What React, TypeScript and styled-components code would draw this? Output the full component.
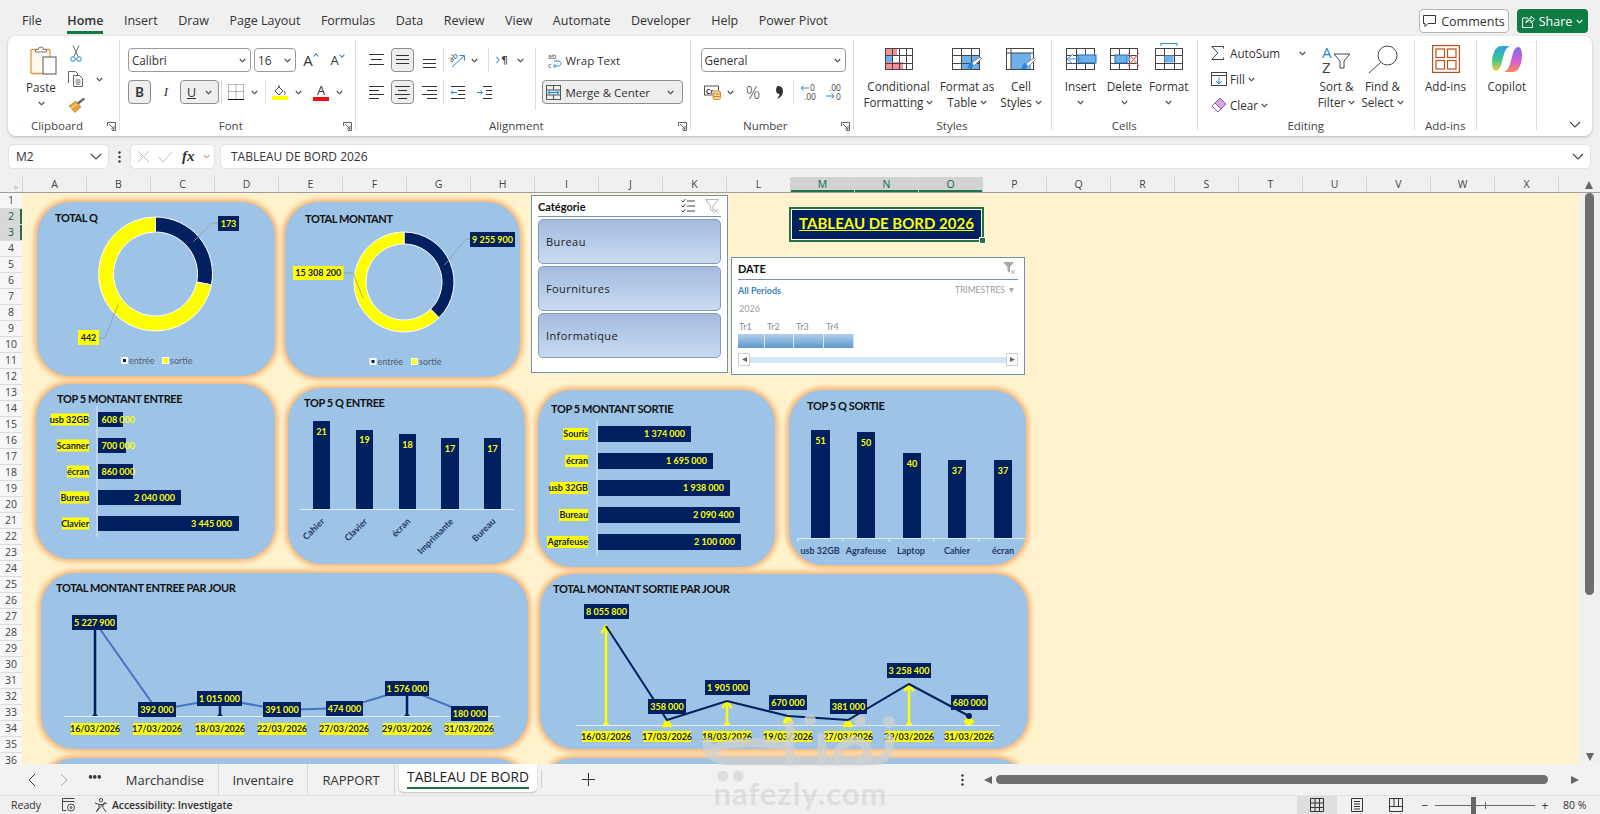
import React from "react";
import styled, { createGlobalStyle } from "styled-components";

const Global = createGlobalStyle`
  html, body { margin: 0; padding: 0; background: #f0f0f0; }
  * { box-sizing: border-box; }
`;
const UI = `"Open Sans", "Noto Sans", sans-serif`;
const CAL = `Lato, "Liberation Sans", sans-serif`;

const Page = styled.div`
  position: relative; width: 1600px; height: 814px; overflow: hidden;
  background: #f0f0f0; font-family: ${UI}; color: #333; display: flex; flex-direction: column;
`;

/* ---------- top tabs ---------- */
const TopBar = styled.div`height: 36px; display: flex; align-items: flex-start; flex: none;`;
const TabList = styled.div`display: flex; padding: 12px 0 0 22px; gap: 20.5px;`;
const TopTab = styled.div<{ $on?: boolean }>`
  font-size: 12.5px; line-height: 18px; height: 22px; color: #333; white-space: nowrap;
  font-weight: ${(p) => (p.$on ? 600 : 400)};
  border-bottom: ${(p) => (p.$on ? "3px solid #107c41" : "none")};
  margin-left: ${(p) => (p.$on ? 5 : 0)}px;
`;
const TopActions = styled.div`margin-left: auto; display: flex; gap: 8px; padding: 9px 12px 0 0;`;
const CommentsBtn = styled.div`
  width: 90px; height: 24px; border: 1px solid #b5b5b5; border-radius: 4px; background: #fff;
  display: flex; align-items: center; justify-content: center; gap: 5px; font-size: 12.5px;
`;
const ShareBtn = styled.div`
  width: 71px; height: 24px; border-radius: 4px; background: #0f7b45; color: #fff;
  display: flex; align-items: center; justify-content: center; gap: 4px; font-size: 12.5px;
`;

/* ---------- ribbon ---------- */
const Ribbon = styled.div`
  flex: none; margin-left: 8px; width: 1584px; height: 100px; background: #fff; border-radius: 8px;
  box-shadow: 0 1px 3px rgba(0,0,0,.22); display: flex; padding-top: 4px; position: relative;
`;
const Group = styled.div<{ $w: number; $plain?: boolean }>`
  width: ${(p) => p.$w}px; flex: none; height: 90px; display: flex; flex-direction: column;
  border-right: ${(p) => (p.$plain ? "none" : "1px solid #dedede")};
`;
const GroupBody = styled.div`height: 78px; display: flex; flex: none;`;
const GroupFoot = styled.div<{ $off?: number }>`
  height: 16px; flex: none; display: grid; grid-template-columns: 1fr auto 1fr; align-items: center;
  font-size: 11.5px; line-height: 16px; color: #444; padding-right: ${(p) => p.$off || 0}px;
`;
const Launcher = styled.span`justify-self: end; display: flex; margin-right: -10px;`;
const Stack = styled.div<{ $pl?: number; $w?: number }>`
  display: flex; flex-direction: column; gap: 8px; padding-top: 8px;
  ${(p) => (p.$pl ? `padding-left:${p.$pl}px;` : "")}
  ${(p) => (p.$w ? `width:${p.$w}px;flex:none;` : "")}
`;
const Row = styled.div`display: flex; height: 24px; align-items: center;`;
const Slot = styled.div<{ $w?: number; $ml?: number }>`
  flex: none; display: flex; align-items: center; justify-content: center; height: 24px;
  ${(p) => (p.$w ? `width:${p.$w}px;` : "")}
  margin-left: ${(p) => p.$ml || 0}px; font-size: 11.7px; white-space: nowrap;
`;
const Pressed = styled(Slot)`
  background: #eee; border: 1px solid #8d8d8d; border-radius: 4px; font-weight: 400;
`;
const VSep = styled.div<{ $ml?: number }>`width: 1px; height: 24px; background: #dcdcdc; flex: none; margin-left: ${(p) => p.$ml || 0}px;`;
const FullSep = styled(VSep)`height: 62px; margin-top: 8px;`;
const Select = styled.div<{ $w: number; $ml?: number }>`
  flex: none; width: ${(p) => p.$w}px; margin-left: ${(p) => p.$ml || 0}px; height: 24px; background: #fff;
  border: 1px solid #9a9a9a; border-radius: 4px; padding: 0 4px 0 3px; font-size: 11.7px;
  display: flex; align-items: center; justify-content: space-between; font-family: ${UI};
`;
const PasteCol = styled.div`width: 42px; margin-left: 12px; flex: none; display: flex; flex-direction: column; align-items: center; padding-top: 5px;`;
const PasteIconBox = styled.div`height: 33px; margin-left: 4px;`;
const PasteText = styled.div`font-size: 11.7px; line-height: 16px; margin-top: 1px;`;
const ChevLine = styled.div`height: 16px; display: flex; align-items: center; justify-content: center;`;
const ClipCol = styled.div`display: flex; flex-direction: column; margin-left: 6px; flex: none;`;
const ClipRow = styled.div`height: 26px; display: flex; align-items: center;`;
const Big = styled.div<{ $w: number }>`
  width: ${(p) => p.$w}px; flex: none; display: flex; flex-direction: column; align-items: center;
`;
const BigIcon = styled.div<{ $pt?: number }>`height: 38px; padding-top: ${(p) => p.$pt ?? 8}px; display: flex; justify-content: center; flex: none;`;
const BigText = styled.div`font-size: 11.7px; line-height: 16px; text-align: center; white-space: nowrap; display: flex; flex-direction: column; align-items: center;`;
const TextChev = styled.span`display: inline-flex; align-items: center; gap: 3px;`;
const EditCol = styled.div`width: 120px; flex: none; display: flex; flex-direction: column; padding-left: 13px;`;
const EditRow = styled.div`height: 26px; display: flex; align-items: center; font-size: 11.7px;`;
const EditIcon = styled.span`width: 19px; display: flex; flex: none;`;
const Collapse = styled.div`flex: 1; display: flex; justify-content: flex-end; align-items: flex-end; padding: 0 11px 8px 0;`;
const FontA = styled.span<{ $s: number }>`font-size: ${(p) => p.$s}px; line-height: 1; display: inline-flex; align-items: flex-start; font-family: ${UI};`;
const BoldB = styled.span`font-weight: 700; font-size: 13px; font-family: ${CAL};`;
const ItalicI = styled.span`font-style: italic; font-size: 13px; font-family: "Liberation Serif", serif;`;
const UnderU = styled.span`text-decoration: underline; font-size: 12.5px;`;
const ColorBar = styled.div`display: flex; flex-direction: column; align-items: center; width: 16px;`;
const Bar = styled.div<{ $c: string }>`width: 16px; height: 4px; background: ${(p) => p.$c};`;
const WrapLine = styled.div`display: flex; height: 24px; align-items: center; font-size: 11.5px; padding-left: 12px; gap: 4px;`;
const MergeBtn = styled.div`
  margin-left: 6px; width: 141px; height: 24px; background: #eee; border: 1px solid #8d8d8d; border-radius: 4px;
  display: flex; align-items: center; font-size: 11.5px; padding: 0 8px 0 3px; gap: 5px;
`;
const Grow = styled.span`flex: 1;`;

/* ---------- formula bar ---------- */
const FormulaRow = styled.div`
  flex: none; height: 25px; margin: 8px 0; padding-left: 8px; display: flex; align-items: stretch; width: 1591px;
`;
const NameBox = styled.div`
  width: 101px; background: #fff; border: 1px solid #e2e2e2; border-radius: 5px; display: flex; align-items: center;
  justify-content: space-between; padding: 0 6px 0 7px; font-size: 12px;
`;
const DotsV = styled.div`width: 21px; display: flex; align-items: center; justify-content: center;`;
const FxBox = styled.div`
  width: 85px; background: #fff; border: 1px solid #e2e2e2; border-radius: 5px; display: flex; align-items: center; padding-left: 6px; gap: 8px;
`;
const FxText = styled.span`font: italic 700 15px "Liberation Serif", serif; color: #333; margin-left: 1px;`;
const FormulaInput = styled.div`
  flex: 1; margin-left: 5px; background: #fff; border: 1px solid #e2e2e2; border-radius: 5px; display: flex; align-items: center;
  justify-content: space-between; padding: 0 6px 0 10px; font-size: 12px;
`;

/* ---------- grid headers ---------- */
const ColHeader = styled.div`flex: none; height: 16px; display: flex; background: #f0f0f0; border-bottom: 1px solid #9e9e9e;`;
const Corner = styled.div`width: 23px; flex: none; border-right: 1px solid #d5d5d5; display: flex; align-items: flex-end; justify-content: flex-end; padding: 0 3px 2px 0;`;
const ColCell = styled.div<{ $on?: boolean }>`
  width: 64px; flex: none; display: flex; align-items: center; justify-content: center; font-size: 10.5px; line-height: 15px;
  border-right: 1px solid #d5d5d5; color: ${(p) => (p.$on ? "#0e6b3a" : "#444")};
  background: ${(p) => (p.$on ? "#d2d2d2" : "transparent")};
  ${(p) => (p.$on ? "box-shadow: inset 0 -2px 0 #217346;" : "")}
`;
const ColRest = styled.div`flex: 1; display: flex; justify-content: flex-end; align-items: center; padding-right: 7px;`;
const Main = styled.div`flex: none; height: 571px; display: flex;`;
const RowHead = styled.div`width: 22px; flex: none; overflow: hidden; background: #f6f6f6;`;
const RowCell = styled.div<{ $on?: boolean }>`
  height: 16px; font-size: 10.5px; line-height: 15px; text-align: center; border-bottom: 1px solid #dcdcdc;
  color: ${(p) => (p.$on ? "#0e6b3a" : "#444")};
  background: ${(p) => (p.$on ? "#d8d8d8" : "transparent")};
  ${(p) => (p.$on ? "box-shadow: inset -2px 0 0 #217346;" : "")}
`;
const Sheet = styled.div`width: 1557px; flex: none; position: relative; overflow: hidden; background: #fff2cc; border-left: 0;`;
const VScroll = styled.div`flex: 1; display: flex; flex-direction: column; align-items: center; background: #f0f0f0; padding: 0 0 3px 0;`;
const VThumb = styled.div`width: 9px; height: 402px; border-radius: 5px; background: #6e6e6e; flex: none;`;
const VDown = styled.div`margin-top: auto; display: flex;`;

/* ---------- canvas items ---------- */
const CardBox = styled.div<{ $x: number; $y: number; $w: number; $h: number; $tx: number; $ty: number }>`
  position: absolute; left: ${(p) => p.$x - 22}px; top: ${(p) => p.$y - 193}px;
  width: ${(p) => p.$w}px; height: ${(p) => p.$h}px; background: #9dc3e6; border-radius: 34px;
  box-shadow: 0 0 4px 2.5px #f7b97d; padding: ${(p) => p.$ty}px 0 0 ${(p) => p.$tx}px;
`;
const CardTitle = styled.div`font: 700 11px/14px ${CAL}; letter-spacing: -.4px; color: #111; white-space: nowrap; position: relative; z-index: 1;`;
const ChartSvg = styled.svg`position: absolute; left: 0; top: 0; overflow: visible;`;
const ValText = styled.text`font: 700 9px ${CAL}; fill: #ffff00;`;
const DarkVal = styled.text`font: 700 9px ${CAL}; fill: #10204c;`;
const AxisText = styled.text`font: 700 9px ${CAL}; fill: #1f3864;`;
const LegendText = styled.text`font: 400 9px ${CAL}; fill: #50606f;`;

const SlicerBox = styled.div<{ $x: number; $y: number; $w: number; $h: number }>`
  position: absolute; left: ${(p) => p.$x - 22}px; top: ${(p) => p.$y - 193}px;
  width: ${(p) => p.$w}px; height: ${(p) => p.$h}px; background: #fff; border: 1px solid #6b93b5; padding: 0 6px;
  display: flex; flex-direction: column;
`;
const SlicerHead = styled.div`
  height: 21px; flex: none; display: flex; align-items: center; justify-content: space-between; border-bottom: 1px solid #6f93b3;
  font: 700 11px ${CAL}; color: #111; padding: 0 2px 0 0;
`;
const SlicerIcons = styled.div`display: flex; gap: 10px; align-items: center;`;
const SlicerItems = styled.div`display: flex; flex-direction: column; gap: 2.5px; padding-top: 2px;`;
const SlicerItem = styled.div`
  height: 44.5px; border: 1px solid #8a9bb0; border-radius: 5px; background: linear-gradient(#a3bbdf, #c8dbf1);
  display: flex; align-items: center; padding-left: 7px; font: 400 11px "Open Sans", sans-serif; letter-spacing: .4px; color: #222;
`;
const DateHead = styled(SlicerHead)`height: 22px;`;
const PeriodRow = styled.div`display: flex; justify-content: space-between; align-items: center; height: 20px; font: 400 9px ${CAL}; color: #9c9c9c; padding-right: 4px;`;
const AllPeriods = styled.span`font: 700 9px ${CAL}; color: #3f7fba;`;
const TrimRight = styled.span`display: inline-flex; align-items: center; gap: 4px; font-size: 8.5px;`;
const YearLabel = styled.div`font: 400 9px ${CAL}; color: #9c9c9c; height: 18px; line-height: 18px; padding-left: 1px;`;
const TrRow = styled.div`display: flex; height: 16px; font: 400 9px ${CAL}; color: #8c8c8c; align-items: center;`;
const TrCell = styled.div<{ $w: number }>`width: ${(p) => p.$w}px; padding-left: 1px; flex: none;`;
const BlueRow = styled.div`display: flex; height: 14px;`;
const BlueCell = styled.div<{ $w: number }>`width: ${(p) => p.$w}px; flex: none; background: linear-gradient(#b3cfea, #5c99cf); border-right: 1px solid #dbe8f4;`;
const HScrollRow = styled.div`display: flex; align-items: center; height: 13px; margin-top: 5px;`;
const MiniBtn = styled.div`width: 12px; height: 13px; border: 1px solid #cfcfcf; display: flex; align-items: center; justify-content: center; flex: none; background: #fff;`;
const MiniTrack = styled.div`flex: 1; height: 6px; background: #d4e5f4;`;

const TitleCell = styled.div`
  position: absolute; left: ${789 - 22}px; top: ${207 - 193}px; width: 195px; height: 35px;
  background: #002060; border: 2.5px solid #217346; outline: 1px solid #fff; outline-offset: -3.5px;
  color: #ffff00; font: 700 15px/29px ${CAL}; text-align: center; text-decoration: underline; white-space: nowrap;
`;
const FillHandle = styled.div`position: absolute; right: -4px; bottom: -4px; width: 7px; height: 7px; background: #217346; border: 1px solid #fff;`;

/* ---------- sheet tabs, status ---------- */
const TabsBar = styled.div`flex: none; height: 32px; display: flex; align-items: flex-start; background: #f2f2f2; border-bottom: 1px solid #e3e3e3; position: relative;`;
const NavIcon = styled.div<{ $ml: number; $w?: number }>`margin-left: ${(p) => p.$ml}px; width: ${(p) => p.$w || 12}px; height: 31px; display: flex; align-items: center; justify-content: center; flex: none;`;
const SheetTab = styled.div<{ $w: number; $ml?: number }>`
  width: ${(p) => p.$w}px; margin-left: ${(p) => p.$ml || 0}px; height: 31px; flex: none; display: flex; align-items: center; justify-content: center; font-size: 13px; color: #333;
  border-right: 1px solid #d8d8d8;
`;
const ActiveTab = styled.div`
  width: 138px; height: 28px; margin-left: 4px; flex: none; background: #fff; border-radius: 0 0 5px 5px; box-shadow: 0 1px 2px rgba(0,0,0,.2);
  font-size: 13.8px; color: #222; display: flex; flex-direction: column; align-items: center; padding-top: 3px; line-height: 19px; white-space: nowrap;
`;
const ActiveLine = styled.div`width: 122px; height: 2px; background: #217346; margin-top: 1px;`;
const ThinSep = styled.div<{ $ml: number }>`width: 1px; height: 18px; margin: 6px 0 0 ${(p) => p.$ml}px; background: #cfcfcf; flex: none;`;
const HThumb = styled.div`width: 552px; height: 9px; background: #6e6e6e; border-radius: 5px; margin: 11px 0 0 4px; flex: none;`;
const StatusBar = styled.div`flex: none; height: 18px; display: flex; align-items: center; background: #f0f0f0; font-size: 10.5px; color: #333;`;
const StatusReady = styled.span`margin-left: 11px; width: 51px; flex: none;`;
const StatusAcc = styled.span`margin-left: 4px; font-weight: 600; font-family: ${UI}; font-size: 10.5px; letter-spacing: -.1px;`;
const StatusRight = styled.div`margin-left: auto; display: flex; align-items: center; height: 18px;`;
const ViewBtn = styled.div<{ $on?: boolean; $w: number }>`
  width: ${(p) => p.$w}px; height: 18px; display: flex; align-items: center; justify-content: center; flex: none;
  background: ${(p) => (p.$on ? "#dedede" : "transparent")};
`;
const Zoomer = styled.div`width: 100px; height: 1px; background: #666; margin: 0 5px; position: relative; flex: none;`;
const ZoomThumb = styled.div`position: absolute; left: 36px; top: -8px; width: 5px; height: 17px; background: #666;`;
const ZoomTick = styled.div`position: absolute; left: 50px; top: -3px; width: 1px; height: 7px; background: #666;`;
const ZoomSign = styled.span<{ $ml?: number }>`font-size: 12px; width: 10px; text-align: center; flex: none; margin-left: ${(p) => p.$ml || 0}px;`;
const ZoomPct = styled.span`font-size: 10.5px; width: 50px; padding-left: 13px; flex: none;`;

/* ---------- watermark ---------- */
const Watermark = styled.div`
  position: absolute; left: 695px; top: 705px; width: 205px; display: flex; flex-direction: column; align-items: center; pointer-events: none;
`;
const WaterText = styled.div`
  font: 700 31px/30px Lato, sans-serif; letter-spacing: 1px; color: rgba(190,190,190,.38); margin-top: -11px; padding-left: 6px;
`;

/* ---------- small icons ---------- */
const Chev = ({ c = "#444", s = 7 }: { c?: string; s?: number }) => (
  <svg width={s} height={5} viewBox="0 0 7 5"><path d="M.8 1 3.5 3.8 6.2 1" fill="none" stroke={c} strokeWidth="1.1" /></svg>
);
const BigChev = ({ c = "#444" }: { c?: string }) => (
  <svg width={12} height={7} viewBox="0 0 12 7"><path d="M1 1l5 5 5-5" fill="none" stroke={c} strokeWidth="1.1" /></svg>
);
const LauncherIcon = () => (
  <svg width={9} height={9} viewBox="0 0 9 9" fill="none" stroke="#555" strokeWidth=".9"><path d="M.5 4V.5h8v8H5M2 2l5 5M7 4v3H4" /></svg>
);
const PasteIcon = () => (
  <svg width={27} height={30} viewBox="0 0 27 30">
    <rect x="1" y="4.5" width="19" height="24" rx="1" fill="#fff9ef" stroke="#dc9c3e" strokeWidth="1.3" />
    <path d="M5.5 7V4.5h3a2.5 2.5 0 0 1 5 0h3V7z" fill="#fff" stroke="#777" />
    <rect x="13" y="12" width="13" height="17" fill="#fff" stroke="#555" />
  </svg>
);
const ScissorsIcon = () => (
  <svg width={12} height={17} viewBox="0 0 12 17" fill="none">
    <path d="M3 .5l5 11M9 .5l-5 11" stroke="#666" />
    <circle cx="3" cy="14" r="2.3" stroke="#2e86c1" /><circle cx="9" cy="14" r="2.3" stroke="#2e86c1" />
  </svg>
);
const CopyIcon = () => (
  <svg width={16} height={16} viewBox="0 0 16 16" fill="#fff" stroke="#555" strokeWidth=".9">
    <path d="M.5 12V.5h7l2 2V5" /><path d="M5.5 4.5h6l3 3v8h-9z" /><path d="M7.5 9h5M7.5 11h5M7.5 13h5" />
  </svg>
);
const BrushIcon = () => (
  <svg width={17} height={15} viewBox="0 0 17 15">
    <path d="M1 8l7-5 5 6-6 5.5z" fill="#e6a13c" stroke="#b87a22" strokeWidth=".6" />
    <path d="M3 10l6-4" stroke="#fff" strokeWidth=".8" />
    <path d="M10.5 5l5-4" stroke="#707070" strokeWidth="2.6" strokeLinecap="round" />
  </svg>
);
const Lines = ({ ys }: { ys: [number, number, number][] }) => (
  <svg width={15} height={16} viewBox="0 0 15 16" stroke="#333" strokeWidth="1">
    {ys.map(([y, a, b], i) => <path key={i} d={`M${a} ${y + .5}H${b}`} />)}
  </svg>
);
const Caret = ({ up }: { up?: boolean }) => (
  <svg width={6} height={4} viewBox="0 0 6 4"><path d={up ? "M.5 3.5 3 .8l2.5 2.7" : "M.5.5 3 3.2 5.500.5"} fill="none" stroke="#2b88d8" strokeWidth="1.1" /></svg>
);
const BorderIcon = () => (
  <svg width={16} height={16} viewBox="0 0 16 16" fill="none" stroke="#777" strokeWidth="1" strokeDasharray="1 1">
    <path d="M.5.500h15M.5 7.500h15M.5.500v15M8 .5v15M15.500.5v15" /><path d="M0 15.500h16" stroke="#111" strokeDasharray="none" />
  </svg>
);
const BucketIcon = () => (
  <svg width={16} height={11} viewBox="0 0 16 11" fill="none">
    <path d="M3 6l4-4 4 4-4 4z" stroke="#444" /><path d="M7 2V0M12 6c1.500 2 1.500 3 .5 3.500" stroke="#444" />
  </svg>
);
const FontColorA = () => <FontA $s={13}>A</FontA>;
const OrientIcon = () => (
  <svg width={17} height={16} viewBox="0 0 17 16" overflow="visible">
    <text x="1" y="9" fontSize="8" fill="#444" fontFamily="Open Sans" transform="rotate(-40 4 8)">ab</text>
    <path d="M3 15 15 4M10.500 3.500H15.500V8.500" fill="none" stroke="#2b88d8" />
  </svg>
);
const ParaIcon = () => (
  <svg width={13} height={12} viewBox="0 0 13 12" overflow="visible">
    <path d="M.5 3 3 6 .5 9" fill="none" stroke="#2b88d8" strokeWidth="1.1" />
    <text x="5" y="10" fontSize="11" fill="#444" fontFamily="DejaVu Sans">¶</text>
  </svg>
);
const IndentIcon = ({ inc }: { inc?: boolean }) => (
  <svg width={15} height={13} viewBox="0 0 15 13" fill="none">
    <path d={inc ? "M6 .5h9M6 12.500h9M9 4.500h6M9 8.500h6" : "M0 .5h14M0 12.500h14M7 4.500h7M7 8.500h7"} stroke="#333" />
    <path d={inc ? "M0 6.500h5M3.500 4.500l2 2-2 2" : "M0 6.500h6M2 4.500l-2 2 2 2"} stroke="#2b88d8" />
  </svg>
);
const WrapIcon = () => (
  <svg width={14} height={16} viewBox="0 0 14 16" overflow="visible">
    <text x="0" y="6.500" fontSize="7" fill="#444" fontFamily="Open Sans">ab</text>
    <text x="0" y="15.500" fontSize="7" fill="#444" fontFamily="Open Sans">c</text>
    <path d="M6 14h4c4 0 4-5 0-5H6M7.500 12 5.500 14l2 2" fill="none" stroke="#2b88d8" />
  </svg>
);
const MergeIcon = () => (
  <svg width={15} height={15} viewBox="0 0 15 15" fill="none">
    <rect x=".5" y=".5" width="14" height="14" stroke="#555" />
    <rect x="1" y="5" width="13" height="5" fill="#cfe6f7" />
    <path d="M0 5h15M0 10h15M7.500 0v5M7.500 10v5" stroke="#555" />
    <path d="M2 7.500h11M4 5.800 2 7.500l2 1.700M11 5.800l2 1.700-2 1.700" stroke="#2b88d8" />
  </svg>
);
const AcctIcon = () => (
  <svg width={17} height={15} viewBox="0 0 17 15" overflow="visible">
    <rect x=".5" y="1" width="14" height="9" fill="#fff" stroke="#555" />
    <text x="2" y="8.500" fontSize="6.500" fill="#333" fontFamily="Open Sans" fontWeight="700">Cr</text>
    <rect x="9" y="6" width="7.500" height="8.500" rx="2" fill="#f4d6a5" stroke="#d98a23" />
    <path d="M9 9h7.500M9 11.500h7.500" stroke="#d98a23" />
  </svg>
);
const PctText = styled.span`font-size: 18px; font-weight: 300; color: #444;`;
const CommaIcon = () => (
  <svg width={9} height={13} viewBox="0 0 9 13"><path d="M3 0c3 0 5 2 5 5 0 4-3 7-6 8 1.500-2 2.500-3.500 2.500-5C3 8 1 7 1 4.500 1 2 2 0 3 0z" fill="#333" /></svg>
);
const DecIcon = ({ inc }: { inc?: boolean }) => (
  <svg width={16} height={17} viewBox="0 0 16 17" overflow="visible">
    <text x={inc ? 3 : 10} y="7" fontSize="8.500" fill="#444" fontFamily="Open Sans">{inc ? ".00" : "0"}</text>
    <text x={inc ? 10 : 4} y="15.500" fontSize="8.500" fill="#444" fontFamily="Open Sans">{inc ? "0" : ".00"}</text>
    <path d={inc ? "M0 12h8M5.500 9.500 8 12l-2.500 2.500" : "M1 4h8M3.500 1.500 1 4l2.500 2.500"} fill="none" stroke="#2b88d8" />
  </svg>
);
const MiniBrush = ({ x, y }: { x: number; y: number }) => (
  <g transform={`translate(${x} ${y})`}>
    <path d="M0 11c4 1 7-1 6.500-4L4 5C1.500 6 2 9 0 11z" fill="#2b88d8" />
    <path d="M5 5.500 13 0l1.500 1.500-7 7" fill="#fff" stroke="#777" strokeWidth=".9" />
  </g>
);
const GridLines = ({ w, h, cols, rows }: { w: number; h: number; cols: number; rows: number }) => (
  <g stroke="#444" strokeWidth="1" fill="none">
    <rect x=".5" y=".5" width={w - 1} height={h - 1} />
    {Array.from({ length: cols - 1 }, (_, i) => <path key={"c" + i} d={`M${Math.round(((i + 1) * w) / cols) + .5} 0v${h}`} />)}
    {Array.from({ length: rows - 1 }, (_, i) => <path key={"r" + i} d={`M0 ${Math.round(((i + 1) * h) / rows) + .5}h${w}`} />)}
  </g>
);
const CondIcon = () => (
  <svg width={28} height={22} viewBox="0 0 28 22">
    <rect x="1" y="1" width="11" height="6" fill="#f58f96" /><rect x="1" y="7" width="6" height="7" fill="#6eb0ea" />
    <rect x="1" y="14" width="17" height="7" fill="#f58f96" />
    <GridLines w={28} h={22} cols={4} rows={3} />
  </svg>
);
const TableFmtIcon = () => (
  <svg width={30} height={28} viewBox="0 0 30 28">
    <rect x="10" y="7" width="18" height="14" fill="#6eb0ea" />
    <GridLines w={28} h={22} cols={3} rows={3} />
    <MiniBrush x={15} y={9} />
  </svg>
);
const CellFmtIcon = () => (
  <svg width={30} height={28} viewBox="0 0 30 28">
    <rect x="5" y="5" width="20" height="16" fill="#6eb0ea" />
    <GridLines w={28} h={22} cols={1} rows={1} />
    <path d="M0 5h28M5 0v22" stroke="#444" />
    <MiniBrush x={15} y={10} />
  </svg>
);
const InsertCell = () => (
  <svg width={32} height={22} viewBox="0 0 32 22">
    <g transform="translate(1 0)"><GridLines w={29} h={22} cols={3} rows={3} /></g>
    <rect x="13" y="7" width="18" height="8" fill="#6eb0ea" stroke="#1f6fb5" />
    <path d="M16 11H4M8 6l-6 5 6 5" fill="#fff" stroke="#2b88d8" />
  </svg>
);
const DeleteCell = () => (
  <svg width={30} height={22} viewBox="0 0 30 22">
    <GridLines w={28} h={22} cols={3} rows={3} />
    <rect x="5" y="7" width="12" height="8" fill="#6eb0ea" stroke="#1f6fb5" />
    <path d="M17 7v8l4-4z" fill="#6eb0ea" /><path d="M18 5l11 13M29 5 18 18" stroke="#e8615b" strokeWidth="1.1" />
  </svg>
);
const FormatCell = () => (
  <svg width={28} height={27} viewBox="0 0 28 27">
    <path d="M6 .5h16M6 0v3M22 0v3" stroke="#2b88d8" />
    <g transform="translate(0 5)"><GridLines w={28} h={22} cols={3} rows={3} /></g>
    <rect x="9.500" y="12.500" width="9" height="7" fill="#6eb0ea" />
  </svg>
);
const SigmaIcon = () => (
  <svg width={13} height={14} viewBox="0 0 13 14"><path d="M12.500 2.500V.5H.8l6 6.500-6 6.500h11.700v-2" fill="none" stroke="#444" /></svg>
);
const FillIcon = () => (
  <svg width={16} height={14} viewBox="0 0 16 14" fill="none"><rect x=".5" y=".5" width="15" height="13" stroke="#444" /><path d="M0 3.500h16" stroke="#444" /><path d="M8 5v7M5 9l3 3 3-3" stroke="#2b88d8" /></svg>
);
const EraserIcon = () => (
  <svg width={16} height={16} viewBox="0 0 16 16"><path d="M1 9 9 1l6 6-8 8z" fill="#d9a7e0" stroke="#9a55a8" /><path d="M4 6l6 6-3 3-6-6z" fill="#fff" stroke="#9a55a8" /></svg>
);
const SortIcon = () => (
  <svg width={29} height={27} viewBox="0 0 29 27" overflow="visible">
    <text x="0" y="12" fontSize="15" fill="#2b88d8" fontFamily="Open Sans">A</text>
    <text x="0" y="26.500" fontSize="15" fill="#444" fontFamily="Open Sans">Z</text>
    <path d="M12 8h16l-6 7v7h-4v-7z" fill="#fff" stroke="#444" />
  </svg>
);
const FindIcon = () => (
  <svg width={30} height={29} viewBox="0 0 30 29" fill="none" stroke="#444"><circle cx="19.500" cy="10.500" r="9.500" /><path d="M12.500 17.500 1 28" /></svg>
);
const AddinsIcon = () => (
  <svg width={28} height={28} viewBox="0 0 28 28" fill="none" stroke="#b7531c" strokeWidth="1.200">
    <rect x=".6" y=".6" width="26.800" height="26.800" /><rect x="4" y="4" width="8.500" height="8.500" /><rect x="15.500" y="4" width="8.500" height="8.500" /><rect x="4" y="15.500" width="8.500" height="8.500" /><rect x="15.500" y="15.500" width="8.500" height="8.500" />
  </svg>
);
const CopilotIcon = () => (
  <svg width={30} height={28} viewBox="0 0 30 28">
    <defs>
      <linearGradient id="cpA" x1="0" y1="0" x2="0" y2="1"><stop offset="0" stopColor="#2aa3e8" /><stop offset=".55" stopColor="#3cc58a" /><stop offset="1" stopColor="#f2d53c" /></linearGradient>
      <linearGradient id="cpB" x1="0" y1="0" x2="0" y2="1"><stop offset="0" stopColor="#7a6be8" /><stop offset=".55" stopColor="#d25fd8" /><stop offset="1" stopColor="#f68a52" /></linearGradient>
    </defs>
    <path d="M9 1H18C14 3 13 6 12 9L9 20C8 23 6 26 4 26 1 26 0 22 0 18 0 10 3 1 9 1Z" fill="url(#cpA)" />
    <path d="M21 27H12C16 25 17 22 18 19L21 8C22 5 24 2 26 2 29 2 30 6 30 10 30 18 27 27 21 27Z" fill="url(#cpB)" />
  </svg>
);
const CommentIcon = () => (
  <svg width={13} height={12} viewBox="0 0 13 12" fill="none" stroke="#333"><path d="M.500.5h12v8H5l-3 3v-3H.500z" /></svg>
);
const ShareIcon = () => (
  <svg width={13} height={13} viewBox="0 0 13 13" fill="none" stroke="#fff"><path d="M6 3H.5v9.500h10V8M4 8c0-3 3-4.500 5-4.500V1l3.500 3.500L9 8V5.500C7 5.500 5 6 4 8z" /></svg>
);
const XIcon = () => (
  <svg width={13} height={13} viewBox="0 0 13 13" stroke="#bdbdbd" fill="none"><path d="M1 1l11 11M12 1 1 12" /></svg>
);
const CheckIcon = () => (
  <svg width={15} height={12} viewBox="0 0 15 12" stroke="#bdbdbd" fill="none"><path d="M1 6l4 5L14 1" /></svg>
);
const Tri = ({ dir, c = "#666", s = 6 }: { dir: "u" | "d" | "l" | "r"; c?: string; s?: number }) => {
  const d = { u: "M0 10 5 0l5 10z", d: "M0 0h10L5 10z", l: "M10 0v10L0 5z", r: "M0 0v10l10-5z" }[dir];
  return <svg width={s} height={s} viewBox="0 0 10 10"><path d={d} fill={c} /></svg>;
};
const CheckListIcon = () => (
  <svg width={14} height={16} viewBox="0 0 14 16" fill="none" stroke="#444"><path d="M.5 2.500l1.500 1.500L4.500 1M.5 7.500 2 9l2.500-3M.5 12.500 2 14l2.500-3M6 3h8M6 8h8M6 13h8" /></svg>
);
const FunnelIcon = ({ w = 14 }: { w?: number }) => (
  <svg width={w} height={w} viewBox="0 0 14 14" fill="none" stroke="#b5b5b5"><path d="M.5.500h13L8 7v5.500L5.500 11V7z" /><path d="M9 10l4 3.500M13 10l-4 3.500" /></svg>
);
const SolidFunnel = () => (
  <svg width={13} height={13} viewBox="0 0 13 13"><path d="M0 0h11L7 5v6L4.500 9V5z" fill="#a8a8a8" /><path d="M8 8l4 4M12 8l-4 4" stroke="#b5b5b5" /></svg>
);
const MacroIcon = () => (
  <svg width={13} height={14} viewBox="0 0 13 14" fill="none" stroke="#444"><path d="M.5.500h12M.5 3.500h12M.5.500v12h4" /><circle cx="9" cy="9.500" r="3.500" /><circle cx="9" cy="9.500" r="1" /></svg>
);
const AccIcon = () => (
  <svg width={14} height={15} viewBox="0 0 14 15" fill="none" stroke="#444"><circle cx="7" cy="2.200" r="1.700" /><path d="M1 5l4 1.500h4L13 5M5 6.500v3L2 14M9 6.500v3l3 4.500" /><path d="M3 13 11 4" /></svg>
);
const ViewGrid = () => (
  <svg width={14} height={14} viewBox="0 0 14 14" stroke="#333" fill="none"><path d="M.5.500h13v13H.5zM.5 5h13M.5 9.500h13M5 .5v13M9.500.5v13" /></svg>
);
const ViewPage = () => (
  <svg width={14} height={14} viewBox="0 0 14 14" stroke="#333" fill="none"><path d="M1.500.500h11v13h-11zM4 3.500h6M4 6h6M4 8.500h6M4 11h6" /></svg>
);
const ViewBreak = () => (
  <svg width={14} height={14} viewBox="0 0 14 14" stroke="#333" fill="none"><path d="M.5.500h13v13H.5zM.5 8.500h13M5 .5v8M9.500.5v8" /></svg>
);
const ThreeDots = styled.span`font-weight: 800; font-size: 10px; letter-spacing: .5px; line-height: 1; transform: translateY(-3px);`;
const VDots = () => (
  <svg width={3} height={12} viewBox="0 0 3 12" fill="#333"><circle cx="1.500" cy="1.500" r="1.200" /><circle cx="1.500" cy="6" r="1.200" /><circle cx="1.500" cy="10.500" r="1.200" /></svg>
);
const ChevronLR = ({ right, c = "#333" }: { right?: boolean; c?: string }) => (
  <svg width={8} height={14} viewBox="0 0 8 14" fill="none" stroke={c}><path d={right ? "M1 1l6 6-6 6" : "M7 1 1 7l6 6"} /></svg>
);

/* ---------- charts ---------- */
type ChartFrame = { x: number; y: number; w: number; h: number; title: string; tx: number; ty: number; children: React.ReactNode };
const Card = ({ x, y, w, h, title, tx, ty, children }: ChartFrame) => (
  <CardBox $x={x} $y={y} $w={w} $h={h} $tx={tx - x} $ty={ty - y - 7}>
    {title && <CardTitle>{title}</CardTitle>}
    <ChartSvg width={w} height={h} viewBox={`${x} ${y} ${w} ${h}`}>{children}</ChartSvg>
  </CardBox>
);
const Tag = ({ x1, x2, y1, y2, t, yellow }: { x1: number; x2: number; y1: number; y2: number; t: string; yellow?: boolean }) => (
  <g>
    <rect x={x1} y={y1} width={x2 - x1} height={y2 - y1} fill={yellow ? "#ffff00" : "#002060"} />
    {yellow
      ? <DarkVal x={(x1 + x2) / 2} y={(y1 + y2) / 2 + 3.2} textAnchor="middle">{t}</DarkVal>
      : <ValText x={(x1 + x2) / 2} y={(y1 + y2) / 2 + 3.2} textAnchor="middle">{t}</ValText>}
  </g>
);
const pt = (cx: number, cy: number, r: number, a: number) => {
  const t = ((a - 90) * Math.PI) / 180;
  return [cx + r * Math.cos(t), cy + r * Math.sin(t)];
};
const ring = (cx: number, cy: number, ro: number, ri: number, a: number, b: number) => {
  const [x1, y1] = pt(cx, cy, ro, a), [x2, y2] = pt(cx, cy, ro, b), [x3, y3] = pt(cx, cy, ri, b), [x4, y4] = pt(cx, cy, ri, a);
  const large = b - a > 180 ? 1 : 0;
  return `M${x1} ${y1}A${ro} ${ro} 0 ${large} 1 ${x2} ${y2}L${x3} ${y3}A${ri} ${ri} 0 ${large} 0 ${x4} ${y4}Z`;
};
const Donut = ({ cx, cy, ro, ri, a }: { cx: number; cy: number; ro: number; ri: number; a: number }) => (
  <g stroke="#fff" strokeWidth="1">
    <path d={ring(cx, cy, ro, ri, 0, a)} fill="#002060" />
    <path d={ring(cx, cy, ro, ri, a, 360)} fill="#ffff00" />
  </g>
);
const Legend = ({ y, x1, x2 }: { y: number; x1: number; x2: number }) => (
  <g>
    <rect x={x1} y={y - 3} width={7} height={7} fill="#fff" /><rect x={x1 + 2} y={y - 1} width={3} height={3} fill="#002060" />
    <LegendText x={x1 + 8} y={y + 3.500}>entrée</LegendText>
    <rect x={x2} y={y - 3} width={7} height={7} fill="#fff" /><rect x={x2 + 1} y={y - 2} width={5} height={5} fill="#ffff00" />
    <LegendText x={x2 + 8} y={y + 3.500}>sortie</LegendText>
  </g>
);
const Leader = ({ d }: { d: string }) => <path d={d} fill="none" stroke="#8a9aa8" strokeWidth=".8" />;

type HB = { n: string; nl: number; end: number; t: string; te: number };
const HBars = ({ rows, ax, ay1, ay2, top, pitch, bh, nr }: { rows: HB[]; ax: number; ay1: number; ay2: number; top: number; pitch: number; bh: number; nr: number }) => (
  <g>
    <path d={`M${ax} ${ay1}V${ay2}`} stroke="#dfe9f2" />
    {rows.map((r, i) => {
      const y = top + i * pitch;
      return (
        <g key={r.n}>
          <rect x={ax + 1} y={y} width={r.end - ax - 1} height={bh} fill="#002060" />
          <ValText x={r.te} y={y + bh / 2 + 3.200} textAnchor="end">{r.t}</ValText>
          <rect x={r.nl} y={y + bh / 2 - 6} width={nr - r.nl} height={12} fill="#ffff00" />
          <DarkVal x={nr} y={y + bh / 2 + 3.200} textAnchor="end">{r.n}</DarkVal>
        </g>
      );
    })}
  </g>
);
type VB = { n: string; x1: number; x2: number; top: number; ly: number };
const VBars = ({ rows, base }: { rows: VB[]; base: number }) => (
  <g>
    {rows.map((r) => (
      <g key={r.n + r.x1}>
        <rect x={r.x1} y={r.top} width={r.x2 - r.x1} height={base - r.top} fill="#002060" />
      </g>
    ))}
  </g>
);

const Q_E: (VB & { v: string })[] = [
  { n: "Cahier", x1: 313, x2: 330, top: 421, ly: 435, v: "21" },
  { n: "Clavier", x1: 356, x2: 373, top: 430, ly: 443, v: "19" },
  { n: "écran", x1: 399, x2: 416, top: 434, ly: 448, v: "18" },
  { n: "Imprimante", x1: 441, x2: 459, top: 438, ly: 452, v: "17" },
  { n: "Bureau", x1: 484, x2: 501, top: 438, ly: 452, v: "17" },
];
const Q_S: (VB & { v: string })[] = [
  { n: "usb 32GB", x1: 811, x2: 830, top: 430, ly: 444, v: "51" },
  { n: "Agrafeuse", x1: 857, x2: 875, top: 432, ly: 446, v: "50" },
  { n: "Laptop", x1: 903, x2: 921, top: 453, ly: 467, v: "40" },
  { n: "Cahier", x1: 948, x2: 966, top: 460, ly: 474, v: "37" },
  { n: "écran", x1: 994, x2: 1012, top: 460, ly: 474, v: "37" },
];
type LP = { x: number; y: number; lb: [number, number, number, number]; t: string; d: string };
const L_E: LP[] = [
  { x: 95, y: 622, lb: [72, 117, 615, 630], t: "5 227 900", d: "16/03/2026" },
  { x: 157, y: 710, lb: [138, 176, 702, 717], t: "392 000", d: "17/03/2026" },
  { x: 220, y: 699, lb: [197, 242, 691, 706], t: "1 015 000", d: "18/03/2026" },
  { x: 282, y: 710, lb: [263, 301, 702, 717], t: "391 000", d: "22/03/2026" },
  { x: 344, y: 708, lb: [326, 363, 701, 716], t: "474 000", d: "27/03/2026" },
  { x: 407, y: 689, lb: [385, 429, 681, 696], t: "1 576 000", d: "29/03/2026" },
  { x: 469, y: 714, lb: [451, 488, 706, 721], t: "180 000", d: "31/03/2026" },
];
const L_S: LP[] = [
  { x: 606, y: 626, lb: [584, 629, 604, 619], t: "8 055 800", d: "16/03/2026" },
  { x: 667, y: 720, lb: [648, 686, 699, 714], t: "358 000", d: "17/03/2026" },
  { x: 727, y: 701, lb: [705, 750, 680, 695], t: "1 905 000", d: "18/03/2026" },
  { x: 788, y: 716, lb: [769, 807, 695, 710], t: "670 000", d: "19/03/2026" },
  { x: 848, y: 720, lb: [830, 867, 699, 714], t: "381 000", d: "27/03/2026" },
  { x: 909, y: 684, lb: [887, 931, 663, 678], t: "3 258 400", d: "29/03/2026" },
  { x: 969, y: 716, lb: [951, 988, 695, 710], t: "680 000", d: "31/03/2026" },
];

const cols = "ABCDEFGHIJKLMNOPQRSTUVWX".split("");
const tabs = ["File", "Home", "Insert", "Draw", "Page Layout", "Formulas", "Data", "Review", "View", "Automate", "Developer", "Help", "Power Pivot"];

export default function App() {
  return (
    <Page>
      <Global />
      <TopBar>
        <TabList>{tabs.map((t) => <TopTab key={t} $on={t === "Home"}>{t}</TopTab>)}</TabList>
        <TopActions>
          <CommentsBtn><CommentIcon />Comments</CommentsBtn>
          <ShareBtn><ShareIcon />Share<Chev c="#fff" /></ShareBtn>
        </TopActions>
      </TopBar>

      <Ribbon>
        <Group $w={112}>
          <GroupBody>
            <PasteCol>
              <PasteIconBox><PasteIcon /></PasteIconBox>
              <PasteText>Paste</PasteText>
              <ChevLine><Chev /></ChevLine>
            </PasteCol>
            <ClipCol>
              <ClipRow><Slot $w={16}><ScissorsIcon /></Slot></ClipRow>
              <ClipRow><CopyIcon /><Slot $ml={11} $w={8}><Chev /></Slot></ClipRow>
              <ClipRow><BrushIcon /></ClipRow>
            </ClipCol>
          </GroupBody>
          <GroupFoot $off={13}><span /><span>Clipboard</span><Launcher><LauncherIcon /></Launcher></GroupFoot>
        </Group>

        <Group $w={235.5}>
          <GroupBody>
            <Stack $pl={8}>
              <Row>
                <Select $w={123}>Calibri<Chev /></Select>
                <Select $w={42} $ml={3}>16<Chev /></Select>
                <Slot $w={16} $ml={7}><FontA $s={15}>A<Caret up /></FontA></Slot>
                <Slot $w={13} $ml={12}><FontA $s={13}>A<Caret /></FontA></Slot>
              </Row>
              <Row>
                <Pressed $w={23}><BoldB>B</BoldB></Pressed>
                <Slot $w={22} $ml={4}><ItalicI>I</ItalicI></Slot>
                <Pressed $w={39} $ml={3}><UnderU>U</UnderU>&nbsp;&nbsp;&nbsp;<Chev /></Pressed>
                <VSep $ml={2} />
                <Slot $w={16} $ml={6}><BorderIcon /></Slot>
                <Slot $w={12} $ml={4}><Chev /></Slot>
                <VSep $ml={5} />
                <Slot $w={16} $ml={6}><ColorBar><BucketIcon /><Bar $c="#ffff00" /></ColorBar></Slot>
                <Slot $w={12} $ml={4}><Chev /></Slot>
                <Slot $w={16} $ml={9}><ColorBar><FontColorA /><Bar $c="#ee1111" /></ColorBar></Slot>
                <Slot $w={12} $ml={4}><Chev /></Slot>
              </Row>
            </Stack>
          </GroupBody>
          <GroupFoot $off={13}><span /><span>Font</span><Launcher><LauncherIcon /></Launcher></GroupFoot>
        </Group>

        <Group $w={335.5}>
          <GroupBody>
            <Stack $w={179}>
              <Row>
                <Slot $w={15} $ml={13}><Lines ys={[[2, 0, 15], [7, 2, 13], [12, 0, 15]]} /></Slot>
                <Pressed $w={23} $ml={7}><Lines ys={[[3, 1, 14], [7, 1, 14], [11, 1, 14]]} /></Pressed>
                <Slot $w={15} $ml={8}><Lines ys={[[7, 1, 14], [11, 1, 14], [15, 1, 14]]} /></Slot>
                <VSep $ml={6} />
                <Slot $w={16} $ml={6}><OrientIcon /></Slot>
                <Slot $w={12} $ml={3}><Chev /></Slot>
                <VSep $ml={7} />
                <Slot $w={12} $ml={8}><ParaIcon /></Slot>
                <Slot $w={12} $ml={6}><Chev /></Slot>
              </Row>
              <Row>
                <Slot $w={15} $ml={13}><Lines ys={[[2, 0, 15], [6, 0, 10], [10, 0, 15], [14, 0, 10]]} /></Slot>
                <Pressed $w={23} $ml={7}><Lines ys={[[2, 0, 15], [6, 3, 12], [10, 0, 15], [14, 3, 12]]} /></Pressed>
                <Slot $w={15} $ml={8}><Lines ys={[[2, 0, 15], [6, 5, 15], [10, 0, 15], [14, 5, 15]]} /></Slot>
                <VSep $ml={6} />
                <Slot $w={15} $ml={7}><IndentIcon /></Slot>
                <Slot $w={15} $ml={11}><IndentIcon inc /></Slot>
              </Row>
            </Stack>
            <FullSep />
            <Stack>
              <WrapLine><WrapIcon />Wrap Text</WrapLine>
              <MergeBtn><MergeIcon />Merge &amp; Center<Grow /><Chev /></MergeBtn>
            </Stack>
          </GroupBody>
          <GroupFoot $off={13}><span /><span>Alignment</span><Launcher><LauncherIcon /></Launcher></GroupFoot>
        </Group>

        <Group $w={162.5}>
          <GroupBody>
            <Stack>
              <Row><Select $w={145} $ml={9.500}>General<Chev /></Select></Row>
              <Row>
                <Slot $w={16} $ml={13}><AcctIcon /></Slot>
                <Slot $w={12} $ml={4}><Chev /></Slot>
                <Slot $w={16} $ml={9}><PctText>%</PctText></Slot>
                <Slot $w={9} $ml={14}><CommaIcon /></Slot>
                <VSep $ml={9} />
                <Slot $w={16} $ml={6}><DecIcon /></Slot>
                <Slot $w={16} $ml={10}><DecIcon inc /></Slot>
              </Row>
            </Stack>
          </GroupBody>
          <GroupFoot $off={13}><span /><span>Number</span><Launcher><LauncherIcon /></Launcher></GroupFoot>
        </Group>

        <Group $w={198}>
          <GroupBody>
            <Big $w={90}>
              <BigIcon><CondIcon /></BigIcon>
              <BigText>Conditional<TextChev>Formatting <Chev /></TextChev></BigText>
            </Big>
            <Big $w={47}>
              <BigIcon><TableFmtIcon /></BigIcon>
              <BigText>Format as<TextChev>Table <Chev /></TextChev></BigText>
            </Big>
            <Big $w={61}>
              <BigIcon><CellFmtIcon /></BigIcon>
              <BigText>Cell<TextChev>Styles <Chev /></TextChev></BigText>
            </Big>
          </GroupBody>
          <GroupFoot><span /><span>Styles</span><span /></GroupFoot>
        </Group>

        <Group $w={146.5}>
          <GroupBody>
            <Big $w={58}>
              <BigIcon><InsertCell /></BigIcon>
              <BigText>Insert<ChevLine><Chev /></ChevLine></BigText>
            </Big>
            <Big $w={30}>
              <BigIcon><DeleteCell /></BigIcon>
              <BigText>Delete<ChevLine><Chev /></ChevLine></BigText>
            </Big>
            <Big $w={58.500}>
              <BigIcon $pt={3}><FormatCell /></BigIcon>
              <BigText>Format<ChevLine><Chev /></ChevLine></BigText>
            </Big>
          </GroupBody>
          <GroupFoot><span /><span>Cells</span><span /></GroupFoot>
        </Group>

        <Group $w={216.500}>
          <GroupBody>
            <EditCol>
              <EditRow><EditIcon><SigmaIcon /></EditIcon>AutoSum<Slot $ml={19}><Chev /></Slot></EditRow>
              <EditRow><EditIcon><FillIcon /></EditIcon>Fill&nbsp;<Chev /></EditRow>
              <EditRow><EditIcon><EraserIcon /></EditIcon>Clear&nbsp;<Chev /></EditRow>
            </EditCol>
            <Big $w={37}>
              <BigIcon $pt={6}><SortIcon /></BigIcon>
              <BigText>Sort &amp;<TextChev>Filter <Chev /></TextChev></BigText>
            </Big>
            <Big $w={55}>
              <BigIcon $pt={5}><FindIcon /></BigIcon>
              <BigText>Find &amp;<TextChev>Select <Chev /></TextChev></BigText>
            </Big>
          </GroupBody>
          <GroupFoot><span /><span>Editing</span><span /></GroupFoot>
        </Group>

        <Group $w={62.300}>
          <GroupBody>
            <Big $w={62}>
              <BigIcon $pt={5}><AddinsIcon /></BigIcon>
              <BigText>Add-ins</BigText>
            </Big>
          </GroupBody>
          <GroupFoot><span /><span>Add-ins</span><span /></GroupFoot>
        </Group>

        <Group $w={60.600}>
          <GroupBody>
            <Big $w={60}>
              <BigIcon $pt={5}><CopilotIcon /></BigIcon>
              <BigText>Copilot</BigText>
            </Big>
          </GroupBody>
        </Group>
        <Collapse><BigChev /></Collapse>
      </Ribbon>

      <FormulaRow>
        <NameBox>M2<BigChev /></NameBox>
        <DotsV><VDots /></DotsV>
        <FxBox><XIcon /><CheckIcon /><FxText>fx</FxText><Chev c="#aaa" /></FxBox>
        <FormulaInput>TABLEAU DE BORD 2026<BigChev /></FormulaInput>
      </FormulaRow>

      <ColHeader>
        <Corner><Tri dir="r" c="#cfcfcf" s={5} /></Corner>
        {cols.map((c) => <ColCell key={c} $on={c === "M" || c === "N" || c === "O"}>{c}</ColCell>)}
        <ColRest><Tri dir="u" s={8} /></ColRest>
      </ColHeader>

      <Main>
        <RowHead>
          {Array.from({ length: 36 }, (_, i) => <RowCell key={i} $on={i === 1 || i === 2}>{i + 1}</RowCell>)}
        </RowHead>
        <Sheet>
          <Card x={37} y={202} w={238} h={174} title="TOTAL Q" tx={55} ty={218}>
            <Donut cx={155.500} cy={274} ro={57} ri={42} a={101} />
            <Leader d="M193 242 212 223H218" />
            <Tag x1={218} x2={239} y1={216} y2={231} t="173" />
            <Leader d="M99 338H105L118 305" />
            <Tag yellow x1={78} x2={99} y1={330} y2={345} t="442" />
            <Legend y={360} x1={121} x2={162} />
          </Card>
          <Card x={285} y={202} w={235} h={175} title="TOTAL MONTANT" tx={305} ty={219}>
            <Donut cx={404} cy={282} ro={50} ri={38} a={135.600} />
            <Leader d="M444.500 265 466 239H470" />
            <Tag x1={470} x2={515} y1={232} y2={247} t="9 255 900" />
            <Leader d="M343.500 273H353L363 298" />
            <Tag yellow x1={293} x2={343.500} y1={266} y2={280} t="15 308 200" />
            <Legend y={361} x1={369.500} x2={411} />
          </Card>

          <SlicerBox $x={531} $y={195} $w={197} $h={178}>
            <SlicerHead>Catégorie<SlicerIcons><CheckListIcon /><FunnelIcon /></SlicerIcons></SlicerHead>
            <SlicerItems>
              <SlicerItem>Bureau</SlicerItem>
              <SlicerItem>Fournitures</SlicerItem>
              <SlicerItem>Informatique</SlicerItem>
            </SlicerItems>
          </SlicerBox>

          <TitleCell>TABLEAU DE BORD 2026<FillHandle /></TitleCell>

          <SlicerBox $x={731} $y={257} $w={294} $h={118}>
            <DateHead>DATE<SolidFunnel /></DateHead>
            <PeriodRow><AllPeriods>All Periods</AllPeriods><TrimRight>TRIMESTRES<Tri dir="d" c="#aaa" s={5} /></TrimRight></PeriodRow>
            <YearLabel>2026</YearLabel>
            <TrRow><TrCell $w={28}>Tr1</TrCell><TrCell $w={29}>Tr2</TrCell><TrCell $w={30}>Tr3</TrCell><TrCell $w={29}>Tr4</TrCell></TrRow>
            <BlueRow><BlueCell $w={27} /><BlueCell $w={29} /><BlueCell $w={30} /><BlueCell $w={30} /></BlueRow>
            <HScrollRow><MiniBtn><Tri dir="l" s={5} /></MiniBtn><MiniTrack /><MiniBtn><Tri dir="r" s={5} /></MiniBtn></HScrollRow>
          </SlicerBox>

          <Card x={36} y={384} w={239} h={175} title="TOP 5 MONTANT ENTREE" tx={57} ty={399}>
            <HBars ax={97} ay1={406} ay2={537} top={412} pitch={26} bh={15} nr={89} rows={[
              { n: "usb 32GB", nl: 51, end: 123, t: "608 000", te: 135 },
              { n: "Scanner", nl: 57, end: 126, t: "700 000", te: 135 },
              { n: "écran", nl: 67, end: 133, t: "860 000", te: 135 },
              { n: "Bureau", nl: 60, end: 181, t: "2 040 000", te: 175 },
              { n: "Clavier", nl: 62, end: 239, t: "3 445 000", te: 232 },
            ]} />
          </Card>

          <Card x={288} y={388} w={237} h={176} title="TOP 5 Q ENTREE" tx={304} ty={403}>
            <path d="M300 509.500H514" stroke="#dfe9f2" />
            <VBars rows={Q_E} base={509} />
            {Q_E.map((r) => (
              <g key={r.n}>
                <ValText x={(r.x1 + r.x2) / 2} y={r.ly} textAnchor="middle">{r.v}</ValText>
                <AxisText x={r.x2 - 5} y={522} textAnchor="end" transform={`rotate(-45 ${r.x2 - 5} 522)`}>{r.n}</AxisText>
              </g>
            ))}
          </Card>

          <Card x={538} y={390} w={237} h={177} title="TOP 5 MONTANT SORTIE" tx={551} ty={409}>
            <HBars ax={597} ay1={420} ay2={556} top={426} pitch={27} bh={16} nr={588} rows={[
              { n: "Souris", nl: 563, end: 691, t: "1 374 000", te: 685 },
              { n: "écran", nl: 565, end: 713, t: "1 695 000", te: 707 },
              { n: "usb 32GB", nl: 550, end: 730, t: "1 938 000", te: 724 },
              { n: "Bureau", nl: 559, end: 740, t: "2 090 400", te: 734 },
              { n: "Agrafeuse", nl: 547, end: 741, t: "2 100 000", te: 735 },
            ]} />
          </Card>

          <Card x={789} y={390} w={237} h={175} title="TOP 5 Q SORTIE" tx={807} ty={406}>
            <path d="M798 538.500H1025M798 538v4M843 538v4M889 538v4M934 538v4M979 538v4" stroke="#dfe9f2" fill="none" />
            <VBars rows={Q_S} base={538} />
            {Q_S.map((r, i) => (
              <g key={r.n}>
                <ValText x={(r.x1 + r.x2) / 2} y={r.ly} textAnchor="middle">{r.v}</ValText>
                <AxisText x={[820, 866, 911, 957, 1003][i]} y={554} textAnchor="middle">{r.n}</AxisText>
              </g>
            ))}
          </Card>

          <Card x={41} y={573} w={487} h={176} title="TOTAL MONTANT ENTREE PAR JOUR" tx={56} ty={588}>
            <path d="M64 716.500H500" stroke="#e6edf4" />
            <path d={L_E.map((p, i) => `${i ? "L" : "M"}${p.x} ${p.y}`).join("")} fill="none" stroke="#4472c4" strokeWidth="2" />
            {L_E.map((p) => (
              <g key={p.x}>
                <path d={`M${p.x} ${p.lb[3]}V716`} stroke="#002060" strokeWidth="2.500" />
                <path d={`M${p.x - 3} 716 ${p.x} 713l3 3z`} fill="#002060" />
                <Tag x1={p.lb[0]} x2={p.lb[1]} y1={p.lb[2]} y2={p.lb[3]} t={p.t} />
                <Tag yellow x1={p.x - 24} x2={p.x + 24} y1={723} y2={735} t={p.d} />
              </g>
            ))}
          </Card>

          <Card x={540} y={574} w={488} h={175} title="TOTAL MONTANT SORTIE PAR JOUR" tx={553} ty={589}>
            <path d="M576 725.500H1000" stroke="#e6edf4" />
            {L_S.map((p) => (
              <g key={p.x}>
                <path d={`M${p.x} 725V${p.y + 3}`} stroke="#ffff00" strokeWidth="2.500" />
                <path d={`M${p.x - 4.500} ${p.y + 7} ${p.x} ${p.y}l4.500 7`} stroke="#ffff00" strokeWidth="2.500" fill={725 - p.y < 12 ? "#ffff00" : "none"} />
                <path d={`M${p.x - 3.500} 725 ${p.x} 720l3.500 5z`} fill="#ffff00" />
              </g>
            ))}
            <path d={L_S.map((p, i) => `${i ? "L" : "M"}${p.x} ${p.y}`).join("")} fill="none" stroke="#002060" strokeWidth="2" />
            <circle cx={969} cy={716} r={3} fill="#002060" />
            {L_S.map((p) => (
              <g key={p.x}>
                <Tag x1={p.lb[0]} x2={p.lb[1]} y1={p.lb[2]} y2={p.lb[3]} t={p.t} />
                <Tag yellow x1={p.x - 24} x2={p.x + 24} y1={731} y2={742} t={p.d} />
              </g>
            ))}
          </Card>

          <Card x={41} y={758} w={487} h={100} title="" tx={56} ty={770}><g /></Card>
          <Card x={540} y={758} w={488} h={100} title="" tx={556} ty={770}><g /></Card>
        </Sheet>
        <VScroll>
          <VThumb />
          <VDown><Tri dir="d" s={8} /></VDown>
        </VScroll>
      </Main>

      <TabsBar>
        <NavIcon $ml={26}><ChevronLR /></NavIcon>
        <NavIcon $ml={20}><ChevronLR right c="#aaa" /></NavIcon>
        <NavIcon $ml={19}><ThreeDots>•••</ThreeDots></NavIcon>
        <SheetTab $w={107} $ml={11}>Marchandise</SheetTab>
        <SheetTab $w={89}>Inventaire</SheetTab>
        <SheetTab $w={87}>RAPPORT</SheetTab>
        <ActiveTab>TABLEAU DE BORD<ActiveLine /></ActiveTab>
        <ThinSep $ml={4} />
        <NavIcon $ml={39} $w={14}><svg width={13} height={13} viewBox="0 0 13 13" stroke="#333"><path d="M6.500 0v13M0 6.500h13" /></svg></NavIcon>
        <NavIcon $ml={366} $w={3}><VDots /></NavIcon>
        <NavIcon $ml={20} $w={8}><Tri dir="l" s={8} /></NavIcon>
        <HThumb />
        <NavIcon $ml={23} $w={8}><Tri dir="r" s={8} /></NavIcon>
      </TabsBar>

      <StatusBar>
        <StatusReady>Ready</StatusReady>
        <MacroIcon />
        <Slot $ml={19} $w={14}><AccIcon /></Slot>
        <StatusAcc>Accessibility: Investigate</StatusAcc>
        <StatusRight>
          <ViewBtn $on $w={40}><ViewGrid /></ViewBtn>
          <ViewBtn $w={40}><ViewPage /></ViewBtn>
          <ViewBtn $w={38}><ViewBreak /></ViewBtn>
          <ZoomSign $ml={5}>−</ZoomSign>
          <Zoomer><ZoomThumb /><ZoomTick /></Zoomer>
          <ZoomSign>+</ZoomSign>
          <ZoomPct>80 %</ZoomPct>
        </StatusRight>
      </StatusBar>

      <Watermark>
        <svg width={205} height={84} viewBox="695 705 205 84" fill="none" stroke="rgba(208,208,208,.74)" strokeWidth="9" strokeLinecap="round">
          <path d="M707 742C706 756 716 761 735 761H872C886 761 891 752 889 738" />
          <path d="M716 748C730 741 760 741 786 746" />
          <path d="M790 725V761M822 737V761" />
          <path d="M838 761C836 745 850 738 860 742 870 745 870 761 858 761" />
          <g fill="rgba(208,208,208,.74)" stroke="none">
            <circle cx="810" cy="720" r="6" /><circle cx="860" cy="721" r="6" /><circle cx="889" cy="722" r="6" />
            <circle cx="723" cy="776" r="5.500" fill="rgba(190,190,190,.4)" /><circle cx="738" cy="776" r="5.500" fill="rgba(190,190,190,.4)" />
          </g>
        </svg>
        <WaterText>nafezly.com</WaterText>
      </Watermark>
    </Page>
  );
}
